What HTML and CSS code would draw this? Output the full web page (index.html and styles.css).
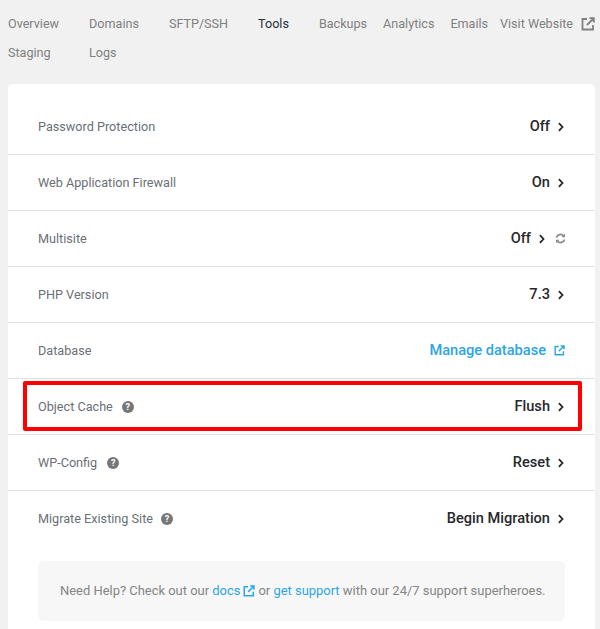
FILE: index.html
```html
<!DOCTYPE html>
<html lang="en">
<head>
<meta charset="utf-8">
<title>Tools</title>
<link rel="stylesheet" href="styles.css">
</head>
<body>
<svg class="sprite" width="0" height="0" aria-hidden="true">
  <symbol id="ext" viewBox="0 0 14 14"><path d="M6 2H1.5v10.5H12V8M8.5 1.2h4.3v4.3M12.5 1.5 6 8" fill="none" stroke="currentColor" stroke-width="1.8"/></symbol>
  <symbol id="chev" viewBox="0 0 8 10"><path d="M1.9 1.2 5.5 5 1.9 8.8" fill="none" stroke="currentColor" stroke-width="1.8"/></symbol>
</svg>
<nav class="tabs">
  <div class="tab-row">
    <a class="tab tab-wide">Overview</a>
    <a class="tab tab-wide">Domains</a>
    <a class="tab tab-wide">SFTP/SSH</a>
    <a class="tab tab-wide active">Tools</a>
    <a class="tab">Backups</a>
    <a class="tab">Analytics</a>
    <a class="tab tab-emails">Emails</a>
    <a class="tab tab-visit">Visit Website<svg class="ext-nav"><use href="#ext"/></svg></a>
  </div>
  <div class="tab-row">
    <a class="tab tab-staging">Staging</a>
    <a class="tab">Logs</a>
  </div>
</nav>
<main class="card">
  <div class="row"><span class="label">Password Protection</span><span class="value">Off<svg class="chev"><use href="#chev"/></svg></span></div>
  <div class="row"><span class="label">Web Application Firewall</span><span class="value">On<svg class="chev"><use href="#chev"/></svg></span></div>
  <div class="row"><span class="label">Multisite</span><span class="value value-sync">Off<svg class="chev"><use href="#chev"/></svg><svg class="sync" viewBox="0 0 12 12"><path d="M1.6 5A4.5 4.5 0 0 1 9.4 3.2M10.4 7A4.5 4.5 0 0 1 2.6 8.8" fill="none" stroke="currentColor" stroke-width="1.9"/><path d="M10.9 .8V4.6H7.1ZM1.1 11.2V7.4H4.9Z" fill="currentColor"/></svg></span></div>
  <div class="row"><span class="label">PHP Version</span><span class="value">7.3<svg class="chev"><use href="#chev"/></svg></span></div>
  <div class="row"><span class="label">Database</span><span class="value link">Manage database<svg class="ext-db"><use href="#ext"/></svg></span></div>
  <div class="row"><span class="label">Object Cache<span class="help">?</span></span><span class="value">Flush<svg class="chev"><use href="#chev"/></svg></span><span class="highlight"></span></div>
  <div class="row"><span class="label">WP-Config<span class="help help-wp">?</span></span><span class="value">Reset<svg class="chev"><use href="#chev"/></svg></span></div>
  <div class="row row-last"><span class="label">Migrate Existing Site<span class="help help-migrate">?</span></span><span class="value">Begin Migration<svg class="chev"><use href="#chev"/></svg></span></div>
  <div class="note">Need Help? Check out our <a>docs</a><svg class="ext-note"><use href="#ext"/></svg>or <a>get support</a> with our 24/7 support superheroes.</div>
</main>
</body>
</html>
```
FILE: styles.css
```css
* { box-sizing: border-box; }
html, body { height: 629px; overflow: hidden; }
body { margin: 0; background: #f1f1f1; font-family: Roboto, sans-serif; font-size: 12.65px; color: #6f6f6f; padding-top: 9px; }
.sprite { position: absolute; }
.tabs { height: 75px; padding: 0 5px 0 8px; font-size: 12.6px; }
.tab-row { display: flex; height: 29px; }
.tab { display: inline-flex; align-items: center; margin-right: 16px; color: #808080; white-space: nowrap; }
.tab-wide { margin-right: 30px; }
.active { color: #26303a; }
.tab-emails { margin-right: 0; }
.tab-visit { margin: 0 0 0 auto; }
.tab-staging { width: 81px; margin-right: 0; }
.ext-nav { width: 14px; height: 14px; margin-left: 8px; color: #808080; }
.card { position: relative; width: 587px; height: 560px; margin-left: 8px; background: #fff; border-radius: 5px 5px 0 0; padding-top: 15px; }
.row { position: relative; display: flex; align-items: center; justify-content: space-between; height: 56px; padding: 0 30px; border-bottom: 1px solid #e3e3e3; }
.row-last { border-bottom-color: transparent; }
.label { display: flex; align-items: center; color: #6a6f75; }
.value { display: flex; align-items: center; padding-bottom: 2px; font-size: 14.6px; font-weight: 500; color: #26282c; }
.value-sync { margin-right: 19px; }
.chev { width: 8px; height: 10px; margin: 2px 0 0 7px; color: #26282c; }
.sync { width: 11px; height: 11px; margin: 2px -20px 0 9px; color: #8a8a8a; }
.link { color: #2ba5e6; }
.ext-db { width: 11px; height: 11px; margin: 2px 0 0 8px; color: #2ba5e6; }
.help { display: inline-flex; align-items: center; justify-content: center; width: 12px; height: 12px; margin-left: 9px; border-radius: 50%; background: #777; color: #fff; font-size: 9px; font-weight: 700; }
.help-wp { margin-left: 10px; }
.help-migrate { margin-left: 8px; }
.highlight { position: absolute; left: 15px; right: 13px; top: 2px; height: 50px; border: 4px solid #f00; border-radius: 2px; }
.note { margin: 14px 30px 0; height: 60px; line-height: 60px; padding-left: 22px; background: #f7f7f7; border-radius: 5px; color: #858585; white-space: nowrap; font-size: 12.95px; }
.note a { color: #2ba5e6; }
.ext-note { width: 12px; height: 12px; margin: 0 3px; vertical-align: -2px; color: #2ba5e6; }
```
